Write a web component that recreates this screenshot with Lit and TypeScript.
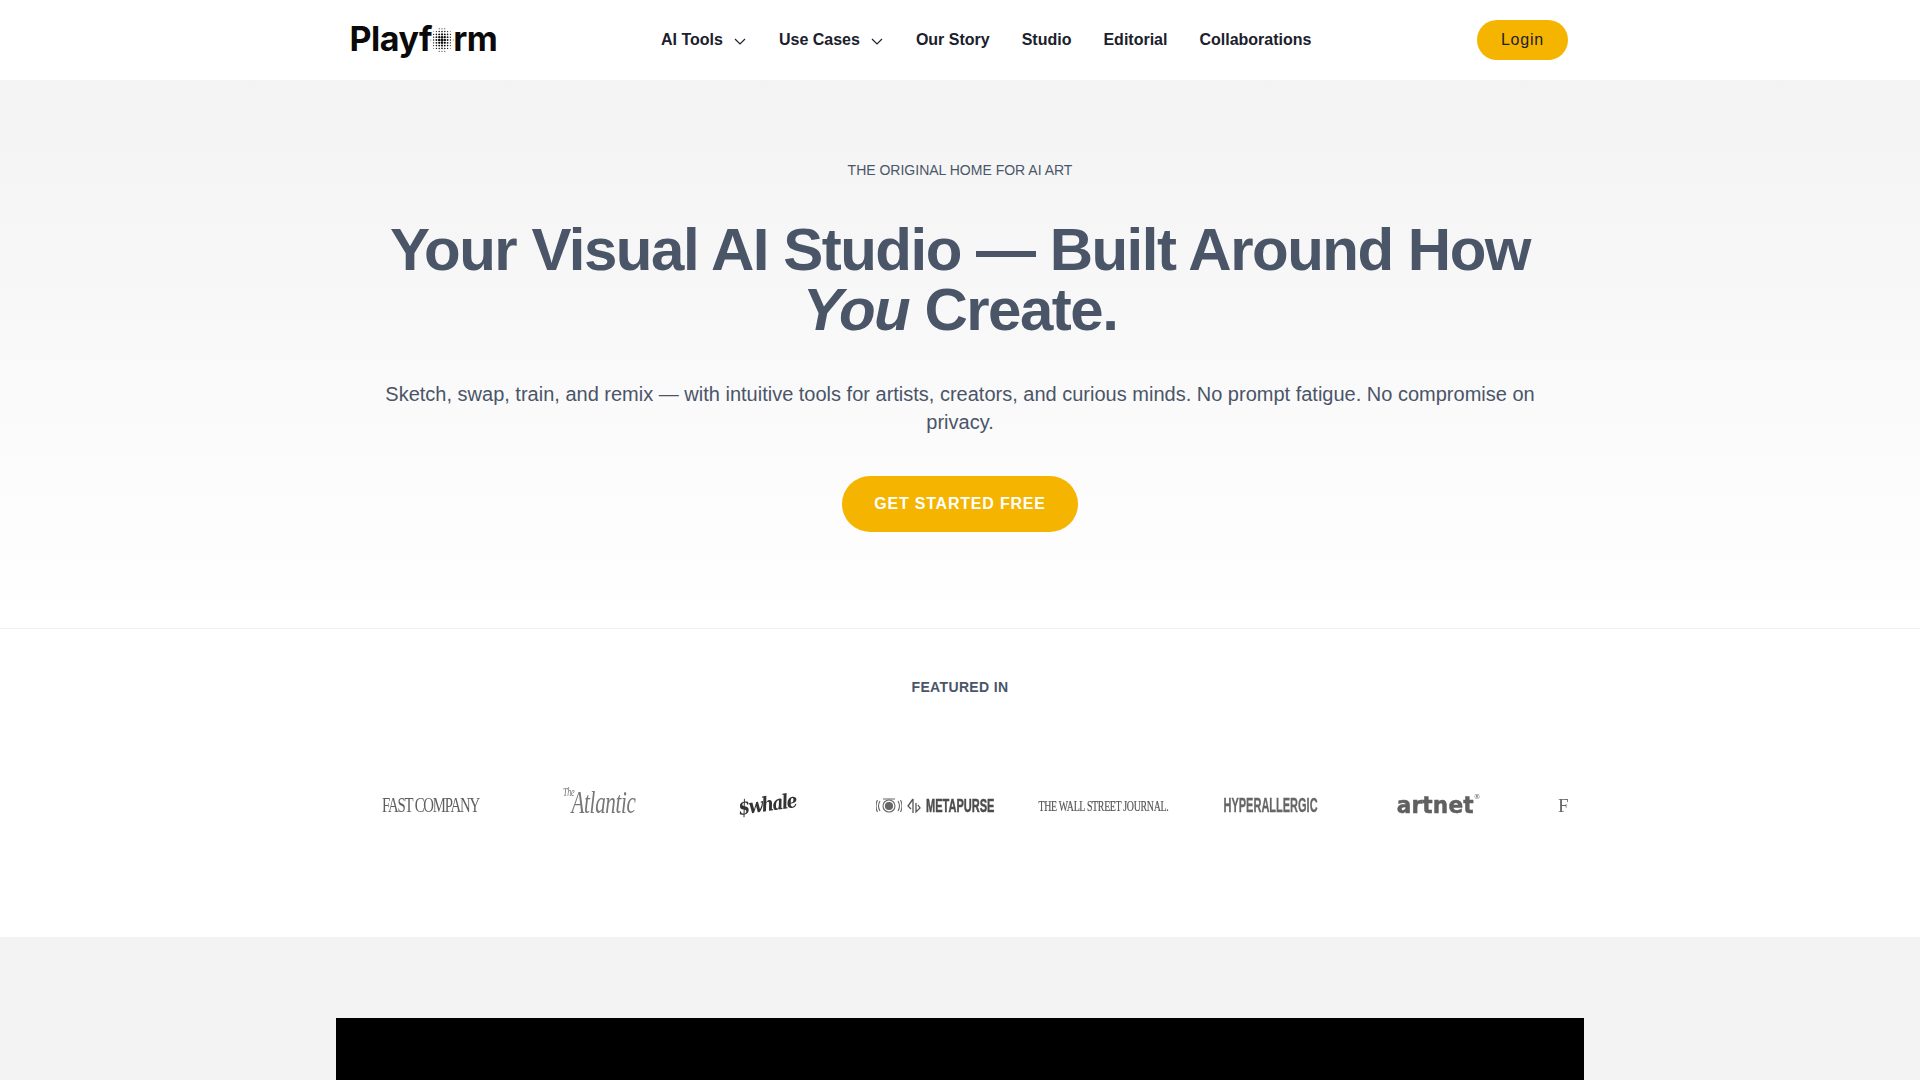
import { LitElement, html, css, svg } from "lit";
import { customElement } from "lit/decorators.js";

function dotGlobe() {
  const dots = [];
  const c = 12;
  const step = 2.8;
  for (let j = -4; j <= 4; j++) {
    for (let i = -4; i <= 4; i++) {
      const x = i * step;
      const y = j * step;
      const d = Math.hypot(x * 1.05, y * 0.92);
      if (d > 11.8) continue;
      const r = Math.max(0.35, 1.5 - d * 0.09);
      dots.push(svg`<circle cx=${c + x} cy=${c + y} r=${r}></circle>`);
    }
  }
  return html`<svg class="globe" viewBox="0 0 24 24" fill="#111">${dots}</svg>`;
}

const chevron = html`<svg class="chev" viewBox="0 0 14 14" fill="none" stroke="#1a202c" stroke-width="1.2"><path d="M2 5l5 5 5-5"/></svg>`;

@customElement("app-root")
export class AppRoot extends LitElement {
  static styles = css`
    :host { display: block; font-family: "Liberation Sans", Arial, sans-serif; background: #f3f3f3; height: 1080px; overflow: hidden; }
    .nav { height: 80px; background: #fff; display: flex; justify-content: center; }
    .nav-in { width: 1248px; padding: 0 16px; box-sizing: border-box; display: flex; align-items: center; position: relative; }
    .logo { display: flex; align-items: center; font-family: Inter, sans-serif; font-weight: 700; font-size: 34px; letter-spacing: -0.45px; color: #0a0a0a; width: 310px; height: 40px; margin: -4px 0 0 -2.5px; }
    .globe { width: 24px; height: 24px; margin: 4px -1px 0 -2px; flex: none; }
    .links { display: flex; align-items: center; gap: 32px; font-weight: 700; font-size: 16px; color: #1a202c; flex: 1; margin-left: 1.5px; }
    .links span { display: flex; align-items: center; gap: 10px; }
    .chev { width: 14px; height: 14px; margin-top: 2px; }
    .login { width: 91px; height: 40px; border-radius: 20px; background: #f5b400; color: #1a202c; font-size: 16px; display: flex; align-items: center; justify-content: center; letter-spacing: 0.8px; }
    .hero { height: 549px; box-sizing: border-box; border-bottom: 1px solid #f0f0f0; background: linear-gradient(#f3f3f3, #fff); text-align: center; padding-top: 80px; color: #4a5568; }
    .eyebrow { font-size: 14px; line-height: 20px; }
    h1 { margin: 40px auto 0; font-size: 60px; line-height: 60px; font-weight: 700; letter-spacing: -1.5px; width: 1200px; }
    .sub { margin: 40px auto 0; width: 1160px; font-size: 20px; line-height: 28px; }
    .cta { margin: 40px auto 0; width: 236px; height: 56px; border-radius: 28px; background: #f5b400; color: #fff; font-weight: 700; font-size: 16px; letter-spacing: 0.8px; display: flex; align-items: center; justify-content: center; }
    .feat { height: 308px; background: #fff; box-sizing: border-box; padding-top: 48px; }
    .feat-title { text-align: center; font-weight: 700; font-size: 14px; line-height: 20px; letter-spacing: 0.35px; color: #4a5568; }
    .clip { width: 1216px; margin: 82px auto 0; overflow: hidden; }
    .track { display: flex; margin-left: -5px; width: 1400px; filter: blur(0.3px); }
    .cell { width: 168px; height: 50px; flex: none; display: flex; align-items: center; justify-content: center; color: #5f5f5f; white-space: nowrap; overflow: visible; }
    .fast { font-family: "Liberation Serif", serif; font-size: 20px; letter-spacing: -1.6px; transform: scaleX(0.74) scaleY(1.05); margin-top: 3px; }
    .atl { font-family: "Liberation Serif", serif; font-style: italic; font-size: 31px; transform: scaleX(0.68); letter-spacing: -0.5px; color: #777; display: flex; margin-top: -2px; }
    .atl small { font-size: 12px; align-self: flex-start; margin: 0 -4px 0 0; }
    .whale { font-family: "DejaVu Serif", serif; font-style: italic; font-weight: 700; font-size: 20px; letter-spacing: -1.8px; color: #333; transform: rotate(-8deg) scaleX(0.85); }
    .meta { display: flex; align-items: center; gap: 5px; margin-top: 3px; width: 118px; }
    .meta svg { flex: none; }
    .meta b { font-family: "Liberation Sans", sans-serif; font-size: 19px; display: block; transform: scaleX(0.58); transform-origin: left; width: 68px; color: #4d4d4d; -webkit-text-stroke: 0.5px #4d4d4d; }
    .wsj { font-family: "Liberation Serif", serif; font-size: 15.500px; letter-spacing: -0.5px; transform: scaleX(0.64); margin-top: 3px; color: #555; -webkit-text-stroke: 0.2px #555; }
    .hyper { font-family: "Liberation Sans", sans-serif; font-weight: 700; font-size: 20px; transform: scaleX(0.55); margin-top: 3px; color: #666; -webkit-text-stroke: 0.3px #666; }
    .art { font-family: "DejaVu Sans", sans-serif; font-weight: 700; font-size: 23px; letter-spacing: 0.2px; margin-top: 1px; color: #606060; display: flex; transform: scaleX(0.94); -webkit-text-stroke: 0.5px #606060; }
    .art sup { font-size: 7px; font-weight: 400; line-height: 10px; margin: 0; -webkit-text-stroke: 0; }
    .f { font-family: "Liberation Serif", serif; font-size: 19px; color: #666; justify-content: flex-start; padding: 3px 0 0 35px; box-sizing: border-box; }
    .bottom { padding-top: 81px; display: flex; justify-content: center; }
    .video { width: 1248px; height: 400px; background: #000; }
  `;

  render() {
    return html`
      <div class="nav"><div class="nav-in">
        <div class="logo">Playf${dotGlobe()}rm</div>
        <div class="links">
          <span>AI Tools ${chevron}</span>
          <span>Use Cases ${chevron}</span>
          <span>Our Story</span>
          <span>Studio</span>
          <span>Editorial</span>
          <span>Collaborations</span>
        </div>
        <div class="login">Login</div>
      </div></div>
      <section class="hero">
        <div class="eyebrow">THE ORIGINAL HOME FOR AI ART</div>
        <h1>Your Visual AI Studio — Built Around How <em>You</em> Create.</h1>
        <p class="sub">Sketch, swap, train, and remix — with intuitive tools for artists, creators, and curious minds. No prompt fatigue. No compromise on privacy.</p>
        <div class="cta">GET STARTED FREE</div>
      </section>
      <section class="feat">
        <div class="feat-title">FEATURED IN</div>
        <div class="clip"><div class="track">
          <div class="cell"><span class="fast">FAST COMPANY</span></div>
          <div class="cell"><span class="atl"><small>The</small>Atlantic</span></div>
          <div class="cell"><span class="whale">$whale</span></div>
          <div class="cell"><div class="meta">
            <svg width="26" height="16" viewBox="0 0 26 16" fill="none" stroke="#666" stroke-width="1.100"><circle cx="13" cy="8" r="3.500" fill="#666"/><circle cx="13" cy="8" r="6"/><path d="M4 3q-3 5 0 10M1.500 2q-3 6 0 12M22 3q3 5 0 10M24.500 2q3 6 0 12M7 1h12"/></svg>
            <svg width="14" height="16" viewBox="0 0 14 16" fill="none" stroke="#555" stroke-width="1.300"><path d="M6 1v14M6 1L1 8l3 3M9 5v9l4-4-2-3"/></svg>
            <b>METAPURSE</b>
          </div></div>
          <div class="cell"><span class="wsj">THE WALL STREET JOURNAL.</span></div>
          <div class="cell"><span class="hyper">HYPERALLERGIC</span></div>
          <div class="cell"><span class="art">artnet<sup>®</sup></span></div>
          <div class="cell f">F</div>
        </div></div>
      </section>
      <div class="bottom"><div class="video"></div></div>
    `;
  }
}
